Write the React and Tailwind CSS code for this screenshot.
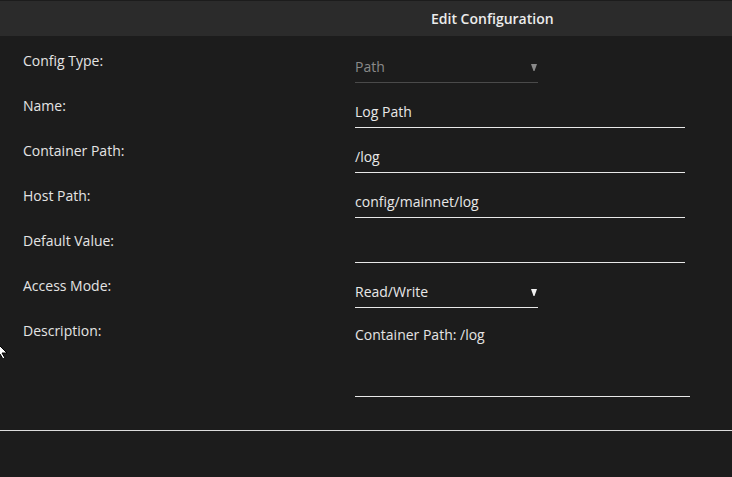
const fields = [
  { label: "Config Type:", value: "Path", kind: "select", muted: true },
  { label: "Name:", value: "Log Path", kind: "text" },
  { label: "Container Path:", value: "/log", kind: "text" },
  { label: "Host Path:", value: "config/mainnet/log", kind: "text" },
  { label: "Default Value:", value: "", kind: "text" },
  { label: "Access Mode:", value: "Read/Write", kind: "select" },
];

function Caret({ muted }) {
  return (
    <svg width="6" height="7" viewBox="0 0 6 7" className={muted ? "text-[#8a8a8a]" : "text-[#f0f0f0]"}>
      <path d="M0 0h6L3.5 7h-1z" fill="currentColor" />
    </svg>
  );
}

function Field({ field }) {
  if (field.kind === "select") {
    return (
      <div
        className={`flex h-[34px] w-[183px] items-end justify-between border-b pb-[5px] ${
          field.muted ? "border-[#4a4a4a] text-[#8a8a8a]" : "border-[#e8e8e8] text-[#e8e8e8]"
        }`}
      >
        <span className="leading-5">{field.value}</span>
        <span className="mb-[6px] mr-[1px]">
          <Caret muted={field.muted} />
        </span>
      </div>
    );
  }
  return (
    <div className="flex h-[34px] w-[330px] items-end border-b border-[#e8e8e8] pb-[5px] text-[#e8e8e8]">
      <span className="leading-5">{field.value}</span>
    </div>
  );
}

export default function App() {
  return (
    <div
      className="relative h-[477px] w-[732px] overflow-hidden bg-[#1c1c1c] text-[14px] text-[#e4e4e4]"
      style={{ fontFamily: '"Open Sans", "Noto Sans", sans-serif' }}
    >
      <div className="mt-[1px] flex h-[35px] items-center bg-[#2b2b2b] pl-[431px]">
        <h2 className="font-semibold text-[#ececec]">Edit Configuration</h2>
      </div>
      <div className="flex flex-col pt-[15px]">
        {fields.map((f) => (
          <div key={f.label} className="flex h-[45px]">
            <div className="w-[355px] pl-[23px] leading-5">{f.label}</div>
            <div className="-mt-[2px]">
              <Field field={f} />
            </div>
          </div>
        ))}
        <div className="flex">
          <div className="w-[355px] pl-[23px] leading-5">Description:</div>
          <div className="mt-[3px] flex h-[73px] w-[335px] items-start border-b border-[#e8e8e8] pt-[1px]">
            <span className="leading-5">Container Path: /log</span>
          </div>
        </div>
      </div>
      <div className="mt-[33px] border-t border-[#dcdcdc]" />
      <svg className="absolute left-0 top-[342px]" width="8" height="16" viewBox="0 0 8 16">
        <path d="M-4 0L7 11H2l3 5-2 1-3-5-4 3z" fill="#fff" stroke="#000" strokeWidth="1" />
      </svg>
    </div>
  );
}
